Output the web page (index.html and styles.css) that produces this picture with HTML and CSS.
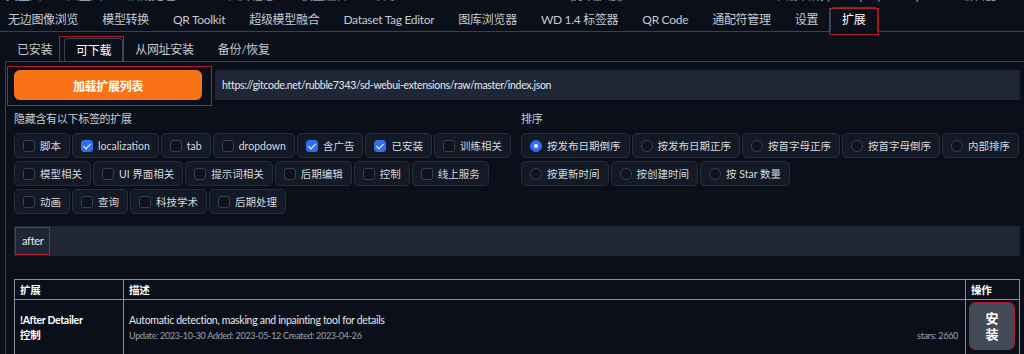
FILE: index.html
```html
<!DOCTYPE html>
<html lang="zh-CN">
<head>
    <meta charset="UTF-8">
    <meta name="viewport" content="width=device-width, initial-scale=1.0">
    <title>扩展 - 可下载</title>
    <link rel="stylesheet" href="styles.css">
</head>
<body>
  <div class="ghost">
    <div class="ghost-row">
      <span>文生图</span><span>图生图</span><span>后期处理</span><span>PNG 图片信息</span><span>模型融合</span><span>训练</span><span>Deforum</span><span>Tiled Diffusion (分块扩散)</span><span>Additional Networks</span><span>图像合成 (Photopea)</span><span>OpenPose 编辑器</span><span>Lora 模型</span>
    </div>
  </div>

  <nav class="tabs top-tabs">
    <button class="tab">无边图像浏览</button>
    <button class="tab">模型转换</button>
    <button class="tab">QR Toolkit</button>
    <button class="tab">超级模型融合</button>
    <button class="tab">Dataset Tag Editor</button>
    <button class="tab">图库浏览器</button>
    <button class="tab">WD 1.4 标签器</button>
    <button class="tab">QR Code</button>
    <button class="tab">通配符管理</button>
    <button class="tab">设置</button>
    <button class="tab active marked">扩展</button>
  </nav>

  <div class="ext-area">
    <nav class="tabs sub-tabs">
      <button class="tab">已安装</button>
      <button class="tab active marked">可下载</button>
      <button class="tab">从网址安装</button>
      <button class="tab">备份/恢复</button>
    </nav>

    <section class="panel">
      <div class="load-row">
        <button class="load-btn">加载扩展列表</button>
        <div class="url-box">https://gitcode.net/rubble7343/sd-webui-extensions/raw/master/index.json</div>
      </div>

      <div class="filters">
        <div class="group">
          <div class="group-label">隐藏含有以下标签的扩展</div>
          <div class="chips">
            <label class="chip"><span class="box"></span>脚本</label>
            <label class="chip"><span class="box on"></span>localization</label>
            <label class="chip"><span class="box"></span>tab</label>
            <label class="chip"><span class="box"></span>dropdown</label>
            <label class="chip"><span class="box on"></span>含广告</label>
            <label class="chip"><span class="box on"></span>已安装</label>
            <label class="chip"><span class="box"></span>训练相关</label>
            <label class="chip"><span class="box"></span>模型相关</label>
            <label class="chip"><span class="box"></span>UI 界面相关</label>
            <label class="chip"><span class="box"></span>提示词相关</label>
            <label class="chip"><span class="box"></span>后期编辑</label>
            <label class="chip"><span class="box"></span>控制</label>
            <label class="chip"><span class="box"></span>线上服务</label>
            <label class="chip"><span class="box"></span>动画</label>
            <label class="chip"><span class="box"></span>查询</label>
            <label class="chip"><span class="box"></span>科技学术</label>
            <label class="chip"><span class="box"></span>后期处理</label>
          </div>
        </div>

        <div class="group">
          <div class="group-label">排序</div>
          <div class="chips">
            <label class="chip"><span class="dot on"></span>按发布日期倒序</label>
            <label class="chip"><span class="dot"></span>按发布日期正序</label>
            <label class="chip"><span class="dot"></span>按首字母正序</label>
            <label class="chip"><span class="dot"></span>按首字母倒序</label>
            <label class="chip"><span class="dot"></span>内部排序</label>
            <label class="chip"><span class="dot"></span>按更新时间</label>
            <label class="chip"><span class="dot"></span>按创建时间</label>
            <label class="chip"><span class="dot"></span>按 Star 数量</label>
          </div>
        </div>
      </div>

      <div class="search"><span class="search-text">after</span></div>

      <table class="ext-table">
        <colgroup>
          <col class="col-name">
          <col>
          <col class="col-action">
        </colgroup>
        <thead>
          <tr><th>扩展</th><th>描述</th><th>操作</th></tr>
        </thead>
        <tbody>
          <tr>
            <td class="ext-name">!After Detailer<br>控制</td>
            <td class="ext-desc">
              <div>Automatic detection, masking and inpainting tool for details</div>
              <div class="ext-meta"><span>Update: 2023-10-30 Added: 2023-05-12 Created: 2023-04-26</span><span>stars: 2660</span></div>
            </td>
            <td class="ext-action"><button class="install-btn">安<br>装</button></td>
          </tr>
        </tbody>
      </table>
    </section>
  </div>
</body>
</html>
```

FILE: styles.css
```css
* {
   box-sizing: border-box;
}

body {
   margin: 0;
   height: 354px;
   overflow: hidden;
   background: #0b0f19;
   color: #d1d5db;
   font-family: Lato, "Noto Sans CJK SC", sans-serif;
   font-size: 12px;
   letter-spacing: -0.3px;
}

/* the tab row above, cut off by the screenshot */
.ghost {
   height: 7px;
   overflow: hidden;
}

.ghost-row {
   display: flex;
   gap: 26px;
   margin-top: -12px;
   padding-left: 6px;
   line-height: 16px;
   color: #9aa0a8;
   white-space: nowrap;
}

.tabs {
   display: flex;
   align-items: flex-end;
}

.tab {
   font: inherit;
   letter-spacing: inherit;
   color: #c5c9d0;
   background: none;
   border: 1px solid transparent;
   border-bottom: none;
   border-radius: 4px 4px 0 0;
   height: 24px;
   line-height: 22px;
   padding: 0 11px;
   white-space: nowrap;
   cursor: pointer;
}

.tab.active {
   color: #fff;
   background: #0b0f19;
   border-color: #374151;
   height: 25px;
   margin-bottom: -1px;
   position: relative;
}

.marked::after {
   content: "";
   position: absolute;
   border: 1px solid #b01c2a;
   pointer-events: none;
}

.top-tabs {
   height: 25px;
   margin-left: -4px;
   border-bottom: 1px solid #374151;
}

.top-tabs .tab.marked::after {
   inset: 0 -2px -3px -2px;
}

.ext-area {
   padding-left: 5px;
}

.sub-tabs {
   height: 29px;
}

.sub-tabs .tab {
   height: 23px;
}

.sub-tabs .tab.active {
   height: 24px;
}

.sub-tabs .tab.marked::after {
   inset: -3px -2px 0 -6px;
}

.panel {
   border-top: 1px solid #374151;
   border-left: 1px solid #374151;
   padding: 8px 4px 0 8px;
}

.load-row {
   display: flex;
   gap: 13px;
   height: 30px;
}

.load-btn {
   position: relative;
   width: 188px;
   border: none;
   border-radius: 6px;
   background: #f97316;
   color: #fff;
   font: inherit;
   letter-spacing: inherit;
   font-weight: bold;
   font-size: 12px;
   cursor: pointer;
}

.load-btn::after {
   content: "";
   position: absolute;
   inset: -4px -10px -6px -7px;
   border: 1px solid #b01c2a;
}

.url-box {
   flex: 1;
   background: #1f2737;
   border-radius: 3px;
   padding-left: 7px;
   line-height: 30px;
   font-size: 10.5px;
   color: #e5e7eb;
}

.filters {
   display: grid;
   grid-template-columns: 1fr 1fr;
   column-gap: 8px;
   margin-top: 10px;
}

.group-label {
   line-height: 18px;
   font-size: 11px;
   color: #c8ccd2;
   margin-bottom: 5px;
}

.chips {
   display: flex;
   flex-wrap: wrap;
   gap: 3px 2px;
}

.chip {
   display: flex;
   align-items: center;
   gap: 5px;
   height: 25px;
   padding: 0 8px;
   background: #131926;
   border: 1px solid #262e3c;
   border-radius: 5px;
   font-size: 10.5px;
   letter-spacing: 0;
   color: #d5d8dd;
   white-space: nowrap;
}

.box, .dot {
   position: relative;
   width: 12px;
   height: 12px;
   border: 1px solid #374151;
   border-radius: 3px;
   background: #0d121c;
}

.dot {
   border-radius: 50%;
}

.box.on, .dot.on {
   background: #2f6fed;
   border-color: #2f6fed;
}

.box.on::after {
   content: "";
   position: absolute;
   left: 3px;
   top: 1px;
   width: 3px;
   height: 6px;
   border: solid #fff;
   border-width: 0 1.5px 1.5px 0;
   transform: rotate(45deg);
}

.dot.on::after {
   content: "";
   position: absolute;
   left: 3px;
   top: 3px;
   width: 4px;
   height: 4px;
   border-radius: 50%;
   background: #fff;
}

.search {
   margin-top: 12px;
   height: 30px;
   padding: 1px;
   background: #1f2737;
}

.search-text {
   display: inline-block;
   border: 1px solid #b01c2a;
   line-height: 26px;
   padding: 0 6px;
   font-size: 11px;
   color: #e5e7eb;
}

.ext-table {
   width: 100%;
   margin-top: 23px;
   border-collapse: collapse;
}

.col-name {
   width: 109px;
}

.col-action {
   width: 54px;
}

.ext-table th, .ext-table td {
   border: 1px solid #8a8f98;
   text-align: left;
   padding: 0 5px;
}

.ext-table th {
   height: 20px;
   font-size: 10.5px;
   color: #fff;
}

.ext-name {
   font-size: 10.5px;
   font-weight: bold;
   color: #fff;
   line-height: 15px;
}

.ext-desc {
   font-size: 10.5px;
   line-height: 15px;
   color: #e5e7eb;
}

.ext-meta {
   display: flex;
   justify-content: space-between;
   padding-right: 2px;
   font-size: 9px;
   color: #9ca3af;
}

.ext-table .ext-action {
   padding: 3px 4px 6px;
}

.install-btn {
   width: 44px;
   padding: 7px 0;
   border: none;
   border-radius: 5px;
   outline: 1px solid #b01c2a;
   background: #434b59;
   color: #fff;
   font: inherit;
   font-size: 13px;
   font-weight: bold;
   line-height: 16px;
   cursor: pointer;
}
```
